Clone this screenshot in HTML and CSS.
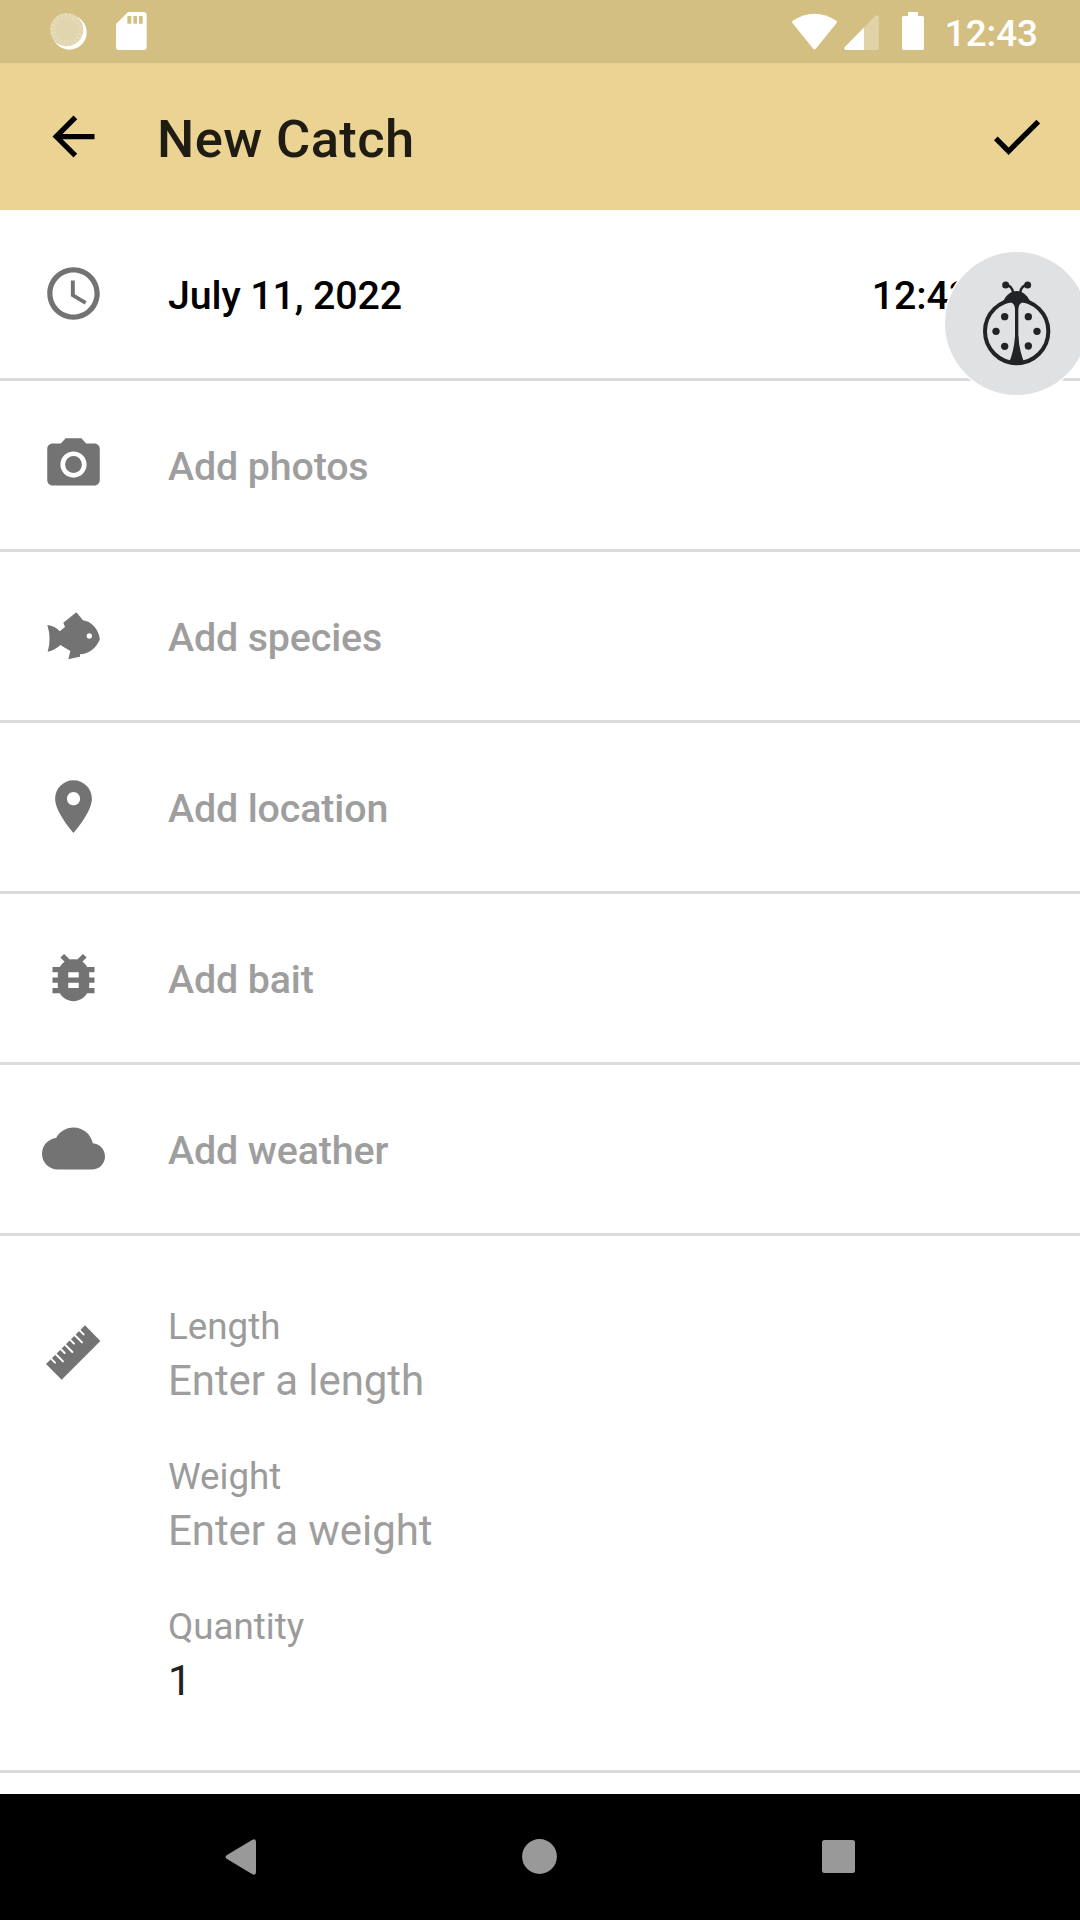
FILE: index.html
```html
<!DOCTYPE html>
<html lang="en">
<head>
<meta charset="utf-8">
<title>New Catch</title>
<link rel="stylesheet" href="styles.css">
</head>
<body>
<div class="screen">
  <div class="status-bar">
    <svg class="status-sync" viewBox="0 0 120 120">
      <circle cx="64" cy="64" r="52" fill="#fff"/>
      <circle cx="56" cy="56" r="50" fill="#e1d5ae"/>
      <circle class="ticks" cx="56" cy="56" r="41" pathLength="220"/>
    </svg>
    <svg class="status-sd" viewBox="0 0 93 114">
      <path fill="#fff" fill-rule="evenodd" d="M36 0H82q10 0 10 10V104q0 10-10 10H10q-10 0-10-10V36ZM34 12V35H46V12ZM52 12V35H63V12ZM69 12V35H80V12Z"/>
    </svg>
    <div class="status-right">
      <svg class="status-wifi" viewBox="0 0 136 110">
        <path fill="#fff" d="M3 22C42-6 94-6 133 22q4 3 1 8L72 107q-4 4-8 0L2 30q-3-5 1-8Z"/>
      </svg>
      <svg class="status-signal" viewBox="0 0 105 106">
        <path fill="#fff" fill-opacity=".3" d="M60 38L95 2q10-4 10 5V100q0 6-6 6H60Z"/>
        <path fill="#fff" d="M60 38V106H5q-8-2-3-9Z"/>
      </svg>
      <svg class="status-battery" viewBox="0 0 66 114">
        <path fill="#fff" d="M18 0H48V12H61q5 0 5 5V109q0 5-5 5H5q-5 0-5-5V17q0-5 5-5H18Z"/>
      </svg>
      <span class="status-time">12:43</span>
    </div>
  </div>
  <header class="app-bar">
    <svg class="icon" viewBox="0 0 24 24"><path d="M20 11H7.830l5.590-5.590L12 4l-8 8 8 8 1.410-1.410L7.830 13H20v-2z"/></svg>
    <h1 class="title">New Catch</h1>
    <svg class="icon" viewBox="0 0 24 24"><path d="M9 16.170L4.830 12l-1.420 1.410L9 19 21 7l-1.410-1.410z"/></svg>
  </header>
  <main class="form">
    <div class="row date-row">
      <svg class="icon" viewBox="0 0 24 24"><path d="M11.990 2C6.470 2 2 6.480 2 12s4.470 10 9.990 10C17.520 22 22 17.520 22 12S17.520 2 11.990 2zM12 20c-4.420 0-8-3.580-8-8s3.580-8 8-8 8 3.580 8 8-3.580 8-8 8zm.5-13H11v6l5.250 3.150.75-1.230-4.500-2.670z"/></svg>
      <span class="row-text">July 11, 2022</span>
      <span class="row-time">12:43 PM</span>
    </div>
    <div class="row">
      <svg class="icon" viewBox="0 0 24 24"><circle cx="12" cy="12" r="3.200"/><path d="M9 2L7.170 4H4c-1.100 0-2 .9-2 2v12c0 1.100.9 2 2 2h16c1.100 0 2-.9 2-2V6c0-1.100-.9-2-2-2h-3.170L15 2H9zm3 15c-2.760 0-5-2.240-5-5s2.240-5 5-5 5 2.240 5 5-2.240 5-5 5z"/></svg>
      <span class="row-text">Add photos</span>
    </div>
    <div class="row">
      <svg class="icon" viewBox="126 191 189 189"><path fill-rule="evenodd" d="M142 254Q165 256 179 273L195 260 190 247 229 216 249 240C273 243 293 264 299 292V298C288 323 267 340 240 342V349L235 350 205 357 211 332 181 314Q165 330 143 334 155 295 142 254ZM276 287a8 8 0 1 0-16 0 8 8 0 1 0 16 0Z"/></svg>
      <span class="row-text">Add species</span>
    </div>
    <div class="row">
      <svg class="icon" viewBox="0 0 24 24"><path d="M12 2C8.130 2 5 5.130 5 9c0 5.250 7 13 7 13s7-7.750 7-13c0-3.870-3.130-7-7-7zm0 9.500c-1.380 0-2.500-1.120-2.500-2.500s1.120-2.500 2.500-2.500 2.500 1.120 2.500 2.500-1.120 2.500-2.500 2.500z"/></svg>
      <span class="row-text">Add location</span>
    </div>
    <div class="row">
      <svg class="icon" viewBox="0 0 24 24"><path d="M20 8h-2.810c-.45-.78-1.070-1.450-1.820-1.960L17 4.410 15.590 3l-2.170 2.170C12.960 5.060 12.490 5 12 5c-.49 0-.96.06-1.410.17L8.410 3 7 4.410l1.620 1.630C7.880 6.550 7.260 7.220 6.810 8H4v2h2.090c-.05.33-.09.66-.09 1v1H4v2h2v1c0 .34.04.67.09 1H4v2h2.810c1.040 1.790 2.970 3 5.190 3s4.150-1.210 5.190-3H20v-2h-2.090c.05-.33.09-.66.09-1v-1h2v-2h-2v-1c0-.34-.04-.67-.09-1H20V8zm-6 8h-4v-2h4v2zm0-4h-4v-2h4v2z"/></svg>
      <span class="row-text">Add bait</span>
    </div>
    <div class="row">
      <svg class="icon" viewBox="0 0 24 24"><path d="M19.350 10.040C18.670 6.590 15.640 4 12 4 9.110 4 6.600 5.640 5.350 8.040 2.340 8.360 0 10.910 0 14c0 3.310 2.690 6 6 6h13c2.760 0 5-2.240 5-5 0-2.640-2.050-4.780-4.650-4.960z"/></svg>
      <span class="row-text">Add weather</span>
    </div>
    <div class="measures">
      <svg class="icon" viewBox="126 122 189 189">
        <path d="M138 251L255 135 301 182 185 298Z"/>
        <path class="notches" d="M150 232L165 247M164 218L189 243M179 203L194 218M192 190L217 215M207 175L222 190M221 161L246 186M236 147L251 162"/>
      </svg>
      <div class="fields">
        <div class="field"><span class="label">Length</span><span class="value hint">Enter a length</span></div>
        <div class="field"><span class="label">Weight</span><span class="value hint">Enter a weight</span></div>
        <div class="field"><span class="label">Quantity</span><span class="value">1</span></div>
      </div>
    </div>
    <div class="fab">
      <svg class="ladybug" viewBox="420 145 220 270">
        <g class="ink-line">
          <circle cx="530" cy="305" r="95" stroke-width="12"/>
          <path stroke-width="7" d="M497 166Q515 166 520 190M563 166Q544 166 540 190"/>
          <path stroke-width="10" d="M530 215V400"/>
        </g>
        <g class="ink">
          <circle cx="497" cy="166" r="10.500"/><circle cx="563" cy="166" r="10.500"/>
          <path d="M490 214C500 194 514 184 530 184S560 194 570 214L560 220Q538 213 535 236H525Q522 213 500 220Z"/>
          <path d="M525 320Q522 365 506 402Q530 412 554 402 538 365 535 320Z"/>
          <circle cx="494" cy="261" r="11"/><circle cx="565" cy="261" r="11"/>
          <circle cx="468" cy="305" r="11"/><circle cx="591" cy="305" r="11"/>
          <circle cx="494" cy="350" r="11"/><circle cx="565" cy="349" r="11"/>
        </g>
      </svg>
    </div>
  </main>
  <nav class="nav-bar">
    <svg class="nav-back" viewBox="0 0 31 36"><path d="M27 1Q31-1 31 3V33Q31 37 27 35L2 20Q-1 18 2 16Z"/></svg>
    <svg class="nav-home" viewBox="0 0 35 35"><circle cx="17.500" cy="17.500" r="17.400"/></svg>
    <svg class="nav-recent" viewBox="0 0 33 33"><rect width="33" height="33" rx="2.500"/></svg>
  </nav>
</div>
</body>
</html>
```
FILE: styles.css
```css
* { box-sizing: border-box; }
body { margin: 0; background: #fff; font-family: Roboto, "Liberation Sans", sans-serif; }
svg { display: block; flex: none; }

.screen { width: 1080px; height: 1920px; display: flex; flex-direction: column; overflow: hidden; }

.status-bar { height: 63px; flex: none; display: flex; align-items: flex-start; background: #d4bf83; padding: 0 42px 0 48px; }
.status-sync { width: 40px; height: 40px; margin-top: 11px; }
.ticks { fill: none; stroke: #e9dfc1; stroke-width: 16; stroke-dasharray: 3 7; }
.status-sd { width: 31px; height: 38px; margin: 12px 0 0 28px; }
.status-right { display: flex; margin-left: auto; }
.status-wifi { width: 45px; height: 37px; margin-top: 13px; }
.status-signal { width: 35px; height: 35px; margin: 15px 0 0 7px; }
.status-battery { width: 22px; height: 38px; margin: 12px 21px 0 23px; }
.status-time { font-size: 36.750px; font-weight: 500; line-height: 68px; color: #fff; }

.app-bar { height: 147px; flex: none; display: flex; align-items: center; background: #ead393; padding: 0 32px 0 42px; }
.title { flex: 1; margin: 4px 0 0 52px; font-size: 52.500px; font-weight: 500; line-height: 60px; letter-spacing: .4px; color: #1f1c14; }

.icon { width: 63px; height: 63px; fill: #737373; }
.app-bar .icon { fill: #000; }

.form { flex: 1; position: relative; }
.row { height: 171px; display: flex; align-items: center; padding: 0 42px; border-bottom: 3px solid #dcdcdc; }
.row .icon { margin-bottom: 1px; }
.row-text, .row-time { font-size: 39.375px; font-weight: 500; line-height: 48px; letter-spacing: -.13px; padding-top: 3px; color: #9e9e9e; }
.row-text { flex: 1; margin-left: 63px; }
.date-row .row-text, .row-time { color: #000; }
.date-row { padding-right: 40px; }

.measures { height: 537px; display: flex; padding: 66px 42px 0; border-bottom: 3px solid #dcdcdc; }
.measures .icon { margin-top: 19px; }
.notches { fill: none; stroke: #fff; stroke-width: 6; stroke-linecap: round; }
.fields { display: flex; flex-direction: column; gap: 42px; margin-left: 63px; }
.field { height: 108px; display: flex; flex-direction: column; }
.label { font-size: 36.750px; line-height: 50px; color: #9b9b9b; }
.value { font-size: 42px; line-height: 58px; letter-spacing: -.08px; color: #212121; }
.hint { color: #9e9e9e; }

.fab { position: absolute; left: 945px; top: 42px; width: 143px; height: 143px; border-radius: 50%; background: #e0e1e3; box-shadow: 0 0 0 1.500px #fff; display: flex; justify-content: center; padding-top: 26px; }
.ladybug { width: 73.330px; height: 90px; }
.ink { fill: #212327; }
.ink-line { fill: none; stroke: #212327; stroke-linecap: round; }

.nav-bar { height: 126px; flex: none; display: flex; align-items: center; background: #000; fill: #999; padding: 0 0 1px 225px; }
.nav-back { width: 31px; height: 36px; }
.nav-home { width: 35px; height: 35px; margin-left: 266px; }
.nav-recent { width: 33px; height: 33px; margin-left: 265px; }
```
